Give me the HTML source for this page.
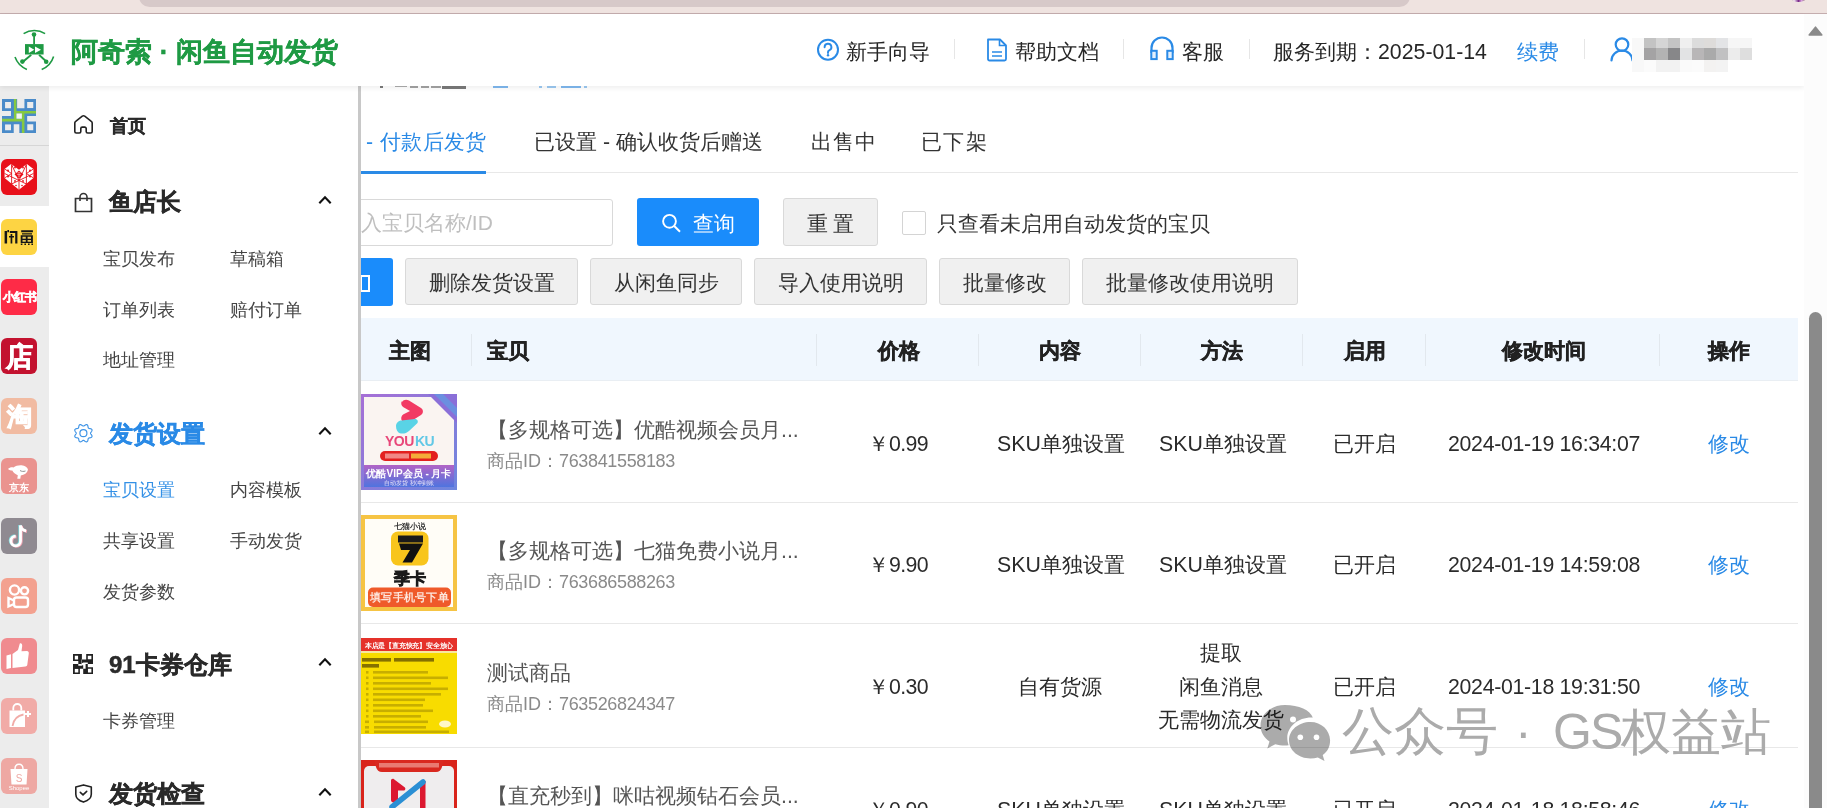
<!DOCTYPE html>
<html><head><meta charset="utf-8">
<style>
*{box-sizing:border-box;margin:0;padding:0}
html,body{width:1827px;height:808px;overflow:hidden;background:#fff;font-family:"Liberation Sans",sans-serif;color:#333}
.a{position:absolute;white-space:nowrap}
#top{left:0;top:0;width:1827px;height:14px;background:#efe3e0;border-bottom:1px solid #c4adae}
#pill{left:139px;top:-14px;width:1271px;height:21px;background:#d7c9c9;border-radius:14px}
#hdr{left:0;top:14px;width:1804px;height:72px;background:#fff;box-shadow:0 2px 5px rgba(0,0,0,.07);z-index:5}
#sb{left:1804px;top:14px;width:23px;height:794px;background:#fcfcfc;z-index:6}
#icol{left:0;top:86px;width:49px;height:722px;background:#ececec}
#menu{left:49px;top:86px;width:309px;height:722px;background:#fff}
#mborder{left:358px;top:86px;width:3px;height:722px;background:#c8c8c8;z-index:4}
.logo-t{left:71px;top:18px;font-size:27.25px;font-weight:bold;color:#1f9a44;-webkit-text-stroke:0.35px #1f9a44;line-height:40px;letter-spacing:0}
.nav{top:23px;font-size:21.3px;line-height:30px;color:#262626}
.sep{top:40px;width:1px;height:20px;background:#e6e6e6}
.mh{font-size:24px;font-weight:bold;line-height:30px;color:#2a2a2a;-webkit-text-stroke:0.5px currentColor;margin-top:1px}
.mi{font-size:18px;line-height:24px;color:#444}
.chev{width:14px;height:9px}
.tab{top:127px;font-size:21.3px;line-height:30px;color:#333}
.btn{height:47px;background:#f0f0f0;border:1px solid #d9d9d9;border-radius:3px;font-size:21.3px;line-height:49px;text-align:center;color:#333}
.th{top:336px;font-size:21.3px;font-weight:bold;line-height:30px;color:#222;-webkit-text-stroke:0.5px #222}
.thd{top:334px;width:1px;height:32px;background:#e2e8ee}
.td{font-size:21.3px;line-height:30px;color:#2b2b2b;margin-top:-1.5px}
.tt{font-size:21.3px;line-height:30px;color:#555}
.tid{font-size:18px;line-height:24px;color:#8a8a8a}
.lnk{color:#2a8ae6}
.dt{letter-spacing:-0.3px}
.rowline{left:361px;width:1437px;height:1px;background:#e8e8e8}
.wm{font-size:50px;line-height:70px;color:#ababab;z-index:3}
.img{width:96px;height:96px;left:361px;overflow:hidden}
</style></head><body>
<div id="top" class="a"><div id="pill" class="a"></div><div class="a" style="left:1791px;top:-6px;width:15px;height:8px;border-radius:50%;background:linear-gradient(90deg,#a89090 0,#f4e8f6 20%,#7a2a8a 50%,#d79ee0 70%,#8a7468 100%)"></div></div>

<div id="hdr" class="a">
  <svg class="a" style="left:5px;top:6px" width="60" height="60" viewBox="0 0 60 60">
    <g fill="none" stroke="#1f9a44" stroke-width="1.6">
      <path d="M18.6 13.7 A20 20 0 0 1 40.1 13.7"/>
      <path d="M10 37.1 A20.8 20.8 0 0 0 21.9 49.4"/>
      <path d="M48.6 36.4 A20.8 20.8 0 0 1 36.7 49.4"/>
    </g>
    <g fill="#1f9a44">
      <circle cx="29" cy="14.5" r="2.3"/><circle cx="17.4" cy="41.6" r="2.3"/><circle cx="41.2" cy="41.8" r="2.3"/>
      <rect x="28.2" y="14.5" width="1.8" height="10"/>
      <path d="M25.5 34.2 L26.9 35.6 L18.3 42.7 L16.9 41.3Z"/>
      <path d="M33.4 35.6 L34.8 34.2 L42.3 41.1 L40.9 42.5Z"/>
      <rect x="20" y="24.1" width="18.6" height="10.4"/>
    </g>
    <g fill="#fff"><path d="M23.8 26.4 L23.8 33 L29.3 29.7Z"/><path d="M30 26.4 L30 33 L36 29.7Z"/></g>
  </svg>
  <div class="a logo-t">阿奇索 · 闲鱼自动发货</div>
  <svg class="a" style="left:816px;top:24px" width="24" height="24" viewBox="0 0 24 24">
    <circle cx="12" cy="11.7" r="10" fill="none" stroke="#2a8ae6" stroke-width="2"/>
    <path d="M8.6 9.2a3.4 3.4 0 1 1 4.6 3.1c-.8.4-1.2 1-1.2 1.8v.9" fill="none" stroke="#2a8ae6" stroke-width="1.9" stroke-linecap="round"/>
    <circle cx="12" cy="17.3" r="1.2" fill="#2a8ae6"/>
  </svg>
  <div class="a nav" style="left:846px">新手向导</div>
  <div class="a sep" style="left:954px;top:25px"></div>
  <svg class="a" style="left:985px;top:23px" width="24" height="26" viewBox="0 0 24 26">
    <path d="M3 2.5h12l6 6V22a1.5 1.5 0 0 1-1.5 1.5h-15A1.5 1.5 0 0 1 3 22Z" fill="none" stroke="#2a8ae6" stroke-width="1.8" stroke-linejoin="round"/>
    <path d="M14.5 2.5v6h6" fill="none" stroke="#2a8ae6" stroke-width="1.6"/>
    <path d="M7 15h10M7 19h10" stroke="#2a8ae6" stroke-width="1.6"/>
  </svg>
  <div class="a nav" style="left:1015px">帮助文档</div>
  <div class="a sep" style="left:1123px;top:25px"></div>
  <svg class="a" style="left:1149px;top:22px" width="26" height="25" viewBox="0 0 26 25">
    <path d="M2.5 17V12a10.5 10.5 0 0 1 21 0v5" fill="none" stroke="#2a8ae6" stroke-width="2.2"/>
    <rect x="2.3" y="14.8" width="5.4" height="8.3" fill="#e3f0fc" stroke="#2a8ae6" stroke-width="2"/>
    <rect x="18.3" y="14.8" width="5.4" height="8.3" fill="#e3f0fc" stroke="#2a8ae6" stroke-width="2"/>
  </svg>
  <div class="a nav" style="left:1182px">客服</div>
  <div class="a sep" style="left:1249px;top:25px"></div>
  <div class="a nav" style="left:1273px">服务到期：2025-01-14</div>
  <div class="a nav lnk" style="left:1517px">续费</div>
  <div class="a sep" style="left:1584px;top:25px"></div>
  <svg class="a" style="left:1609px;top:22px" width="26" height="26" viewBox="0 0 26 26">
    <circle cx="13" cy="8.6" r="6.3" fill="none" stroke="#2a8ae6" stroke-width="2.2"/>
    <path d="M2.5 24.5a10.5 10 0 0 1 21 0" fill="none" stroke="#2a8ae6" stroke-width="2.2" stroke-linecap="round"/>
  </svg>
  <div class="a" style="left:1632px;top:24px;width:12px;height:34px;background:#f8f8f8"></div>
  <div class="a" style="left:1644px;top:24px;width:108px;height:10px;background:linear-gradient(90deg,#c3c3c3 0px 12px,#d5d5d5 12px 24px,#c4c4c4 24px 36px,#efefef 36px 48px,#dcdcdc 48px 60px,#dedcda 60px 72px,#e3e4e6 72px 84px,#f6f6f6 84px 96px,#f6f6f6 96px 108px)"></div>
  <div class="a" style="left:1644px;top:34px;width:108px;height:12px;background:linear-gradient(90deg,#a4a3a4 0px 12px,#b3b3b3 12px 24px,#878789 24px 36px,#e2e3e4 36px 48px,#b8b6b7 48px 60px,#aaaaaa 60px 72px,#c1c1c2 72px 84px,#ececec 84px 96px,#dedede 96px 108px)"></div>
  <div class="a" style="left:1644px;top:46px;width:108px;height:12px;background:linear-gradient(90deg,#fbfbfb 0px 12px,#f2f2f2 12px 24px,#f2f2f2 24px 36px,#fafafa 36px 48px,#fbfbfb 48px 60px,#f3f2f1 60px 72px,#f3f3f3 72px 84px,#fff 84px 96px,#fff 96px 108px)"></div>
</div>

<div id="sb" class="a">
  <svg class="a" style="left:4px;top:12px" width="15" height="10" viewBox="0 0 15 10"><path d="M7.5 1.2L13.8 9H1.2Z" fill="#8a8a8a" stroke="#8a8a8a" stroke-width="1.6" stroke-linejoin="round"/></svg>
  <div class="a" style="left:5px;top:298px;width:13px;height:520px;border-radius:6.5px;background:#8a8a8a"></div>
</div>
<div id="icol" class="a">
  <div class="a" style="left:0;top:59px;width:49px;height:1px;background:#d6d6d6"></div>
  <div class="a" style="left:0;top:120px;width:49px;height:61px;background:#fff"></div>
</div>
<svg class="a" style="left:2px;top:99px" width="34" height="34" viewBox="0 0 20 20">
  <g fill="#4a8bc9" fill-rule="evenodd">
    <path d="M0 0h6.9v7H0Z M1.8 1.8v3.6h3.5V1.8Z"/>
    <path d="M13.2 0H20v7h-6.8Z M14.8 1.8v3.6h3.6V1.8Z"/>
    <path d="M0 13.3h6.9V20H0Z M1.8 14.8v3.6h3.5v-3.6Z"/>
    <path d="M13.2 13.3H20V20h-6.8Z M14.8 14.8v3.6h3.6v-3.6Z"/>
  </g>
  <g fill="#4a8bc9">
    <path d="M5.3 0h3.6v11.8H5.3Z M8.5 5.4H20V10H8.5Z M10.2 8.5h4.6V20h-4.6Z M0 10h12.6v4.8H0Z"/>
  </g>
  <g fill="#86c940">
    <path d="M7 0h1.5v13.2H7Z M7 7H20v1.5H7Z M11.7 7h1.5V20h-1.5Z M0 11.6h13.2v1.6H0Z"/>
  </g>
  <path d="M8.5 8.5h3.2v3.1H8.5Z" fill="#f4f7ef"/>
</svg>
<!-- PDD -->
<svg class="a" style="left:1px;top:159px" width="36" height="36" viewBox="0 0 36 36">
  <rect x="0" y="0" width="36" height="36" rx="6" fill="#e8101a"/>
  <path d="M18 10.7L10.1 5.1 3.6 10 3.6 18.9 18 30.7 32.4 18.9 32.4 10 25.9 5.1Z" fill="#fff"/>
  <g stroke="#e8101a" stroke-width="0.9" fill="none">
    <path d="M10.6 5.5V25M25.4 5.5V25M3.6 14.5L18 21.5 32.4 14.5M3.6 18.9L10.6 14.5M32.4 18.9L25.4 14.5M10.6 5.5L18 21.5 25.4 5.5M18 21.5V30.7M10.6 25L18 21.5 25.4 25M3.6 10L10.6 14.5M32.4 10L25.4 14.5"/>
  </g>
  <path d="M13.5 15.5L18 11.5 22.5 15.5 18 19.5Z" fill="#e8101a"/>
  <g fill="#e8101a"><circle cx="7" cy="11.5" r="1"/><circle cx="29" cy="11.5" r="1"/><circle cx="14" cy="8.5" r="0.9"/><circle cx="22" cy="8.5" r="0.9"/><circle cx="7" cy="17.5" r="1"/><circle cx="29" cy="17.5" r="1"/><circle cx="14" cy="22" r="0.9"/><circle cx="22" cy="22" r="0.9"/><circle cx="15" cy="26.5" r="0.8"/><circle cx="21" cy="26.5" r="0.8"/></g>
  <path d="M16.5 13.8h3M16.2 15.4h3.6M17 17h2" stroke="#fff" stroke-width="0.6"/>
</svg>
<!-- Xianyu -->
<svg class="a" style="left:1px;top:219px" width="36" height="36" viewBox="0 0 36 36">
  <rect x="0" y="0" width="36" height="36" rx="6" fill="#fdd443"/>
  <g fill="#161616">
    <path d="M3.6 12h2.5v12.5H3.6Z M6.4 11h1.6v2.2H6.4Z M8.8 12h7.6v2.1H8.8Z M14.2 12h2.2v12.5h-2.2Z M9.6 15h1.7v9.5H9.6Z M8 17h5v1.6H8Z"/>
    <path d="M20.2 11.2h11.7v2H20.2Z M21 14.3h10v1.2H21Z M19.7 16.3h12.2V24H19.7Z"/>
    <path d="M19.8 24.6h1.6v1.3h-1.6Z M23.4 24.6h1.6v1.3h-1.6Z M27 24.6h1.6v1.3H27Z M30.4 24.6h1.6v1.3h-1.6Z"/>
  </g>
  <g fill="#e8c85a"><path d="M21.5 17.8h3.3v1.9h-3.3Z M26.6 17.8h3.4v1.9h-3.4Z M21.5 21.1h3.3v1.7h-3.3Z M26.6 21.1h3.4v1.7h-3.4Z"/></g>
</svg>
<!-- Xiaohongshu -->
<div class="a" style="left:1px;top:279px;width:36px;height:36px;border-radius:6px;background:#fe2b47;color:#fff;font-size:11.5px;font-weight:bold;line-height:36px;text-align:center;letter-spacing:-1px;-webkit-text-stroke:0.5px #fff">小红书</div>
<!-- Dian -->
<div class="a" style="left:1px;top:338px;width:36px;height:36px;border-radius:6px;background:#c3122f;color:#fff;font-size:27px;font-weight:bold;line-height:38px;text-align:center;-webkit-text-stroke:0.8px #fff">店</div>
<!-- Tao -->
<div class="a" style="left:1px;top:398px;width:36px;height:36px;border-radius:6px;background:#f1bba2;color:#fff;font-size:25px;font-weight:bold;line-height:37px;text-align:center;-webkit-text-stroke:1px #fff">淘</div>
<!-- JD -->
<svg class="a" style="left:1px;top:458px" width="36" height="36" viewBox="0 0 36 36">
  <rect x="0" y="0" width="36" height="36" rx="6" fill="#ea938f"/>
  <path d="M7 11c1.5-1.5 3.5-2.2 5.5-1.6 2-1.6 5-2.4 8-2.2 3.5.3 6 2 6.5 4.6-.8 3.3-3.6 5.3-7.2 5.6l-.5 3.3h-3l.5-3.5c-2.5-.8-4.5-2.6-5.5-4.6-1.5 0-3-.5-4.3-1.6Z" fill="#fff"/>
  <path d="M19 12.5c1.5 1 3.5 1.2 5.5.5" stroke="#777" stroke-width="0.8" fill="none"/>
  <text x="18" y="33" font-size="10" font-weight="bold" fill="#fff" text-anchor="middle" font-family="Liberation Sans, sans-serif">京东</text>
</svg>
<!-- Douyin -->
<svg class="a" style="left:1px;top:518px" width="36" height="36" viewBox="0 0 36 36">
  <rect x="0" y="0" width="36" height="36" rx="6" fill="#8f8a91"/>
  <path d="M19.5 7.5v15.5a4.8 4.8 0 1 1-4.8-4.8" fill="none" stroke="#7fd3d6" stroke-width="2.8" transform="translate(-0.8,-0.6)"/>
  <path d="M19.5 7.5c.6 3 2.6 5 5.6 5.4" fill="none" stroke="#7fd3d6" stroke-width="2.8" transform="translate(-0.8,-0.6)"/>
  <path d="M19.5 7.5v15.5a4.8 4.8 0 1 1-4.8-4.8" fill="none" stroke="#f2a3b3" stroke-width="2.8" transform="translate(0.8,0.6)"/>
  <path d="M19.5 7.5c.6 3 2.6 5 5.6 5.4" fill="none" stroke="#f2a3b3" stroke-width="2.8" transform="translate(0.8,0.6)"/>
  <path d="M19.5 7.5v15.5a4.8 4.8 0 1 1-4.8-4.8" fill="none" stroke="#fff" stroke-width="2.8"/>
  <path d="M19.5 7.5c.6 3 2.6 5 5.6 5.4" fill="none" stroke="#fff" stroke-width="2.8"/>
</svg>
<!-- Kuaishou -->
<svg class="a" style="left:1px;top:578px" width="36" height="36" viewBox="0 0 36 36">
  <rect x="0" y="0" width="36" height="36" rx="6" fill="#f3a18f"/>
  <g fill="none" stroke="#fff" stroke-width="2.4">
    <circle cx="13.5" cy="12" r="4.6"/><circle cx="23.5" cy="12.8" r="3.6"/>
    <rect x="13" y="19.5" width="14" height="9.5" rx="2.5"/>
    <path d="M13 22.5L7.5 20v8.5L13 26"/>
  </g>
</svg>
<!-- Thumb -->
<svg class="a" style="left:1px;top:638px" width="36" height="36" viewBox="0 0 36 36">
  <rect x="0" y="0" width="36" height="36" rx="6" fill="#f08b8f"/>
  <path d="M5.5 17.5l4.5-1.2V30L5.5 31Z" fill="#fff"/>
  <path d="M11.5 16l5.5-4 1.8-6.5c1.6-.6 2.6.8 2.4 2.6l-.7 5.2 5.5-.3c1.2 0 2 1 1.8 2.3l-1.5 11.5c-.2 1-.9 1.6-1.9 1.6L11.5 30Z" fill="#fff"/>
</svg>
<!-- Bag plus -->
<svg class="a" style="left:1px;top:698px" width="36" height="36" viewBox="0 0 36 36">
  <rect x="0" y="0" width="36" height="36" rx="6" fill="#f1aba7"/>
  <path d="M8.5 12.5h15.5v16.5H8.5Z" fill="#fff"/>
  <path d="M12.3 12.5V10a4 4 0 0 1 8 0v2.5" fill="none" stroke="#fff" stroke-width="1.8"/>
  <path d="M11.5 28c1-6 5-10.5 11-11.5" fill="none" stroke="#f1aba7" stroke-width="1.8"/>
  <path d="M27 13v6M24 16h6" stroke="#fff" stroke-width="2"/>
</svg>
<!-- Shopee -->
<svg class="a" style="left:1px;top:758px" width="36" height="36" viewBox="0 0 36 36">
  <rect x="0" y="0" width="36" height="36" rx="6" fill="#eea8a3"/>
  <path d="M9.5 11h17l-1 15.5h-15Z" fill="#fff"/>
  <path d="M14 11c0-3 1.8-4.8 4-4.8s4 1.8 4 4.8" fill="none" stroke="#fff" stroke-width="1.4"/>
  <text x="18" y="23.5" font-size="10" fill="#eea8a3" text-anchor="middle" font-family="Liberation Sans, sans-serif">S</text>
  <text x="18" y="32" font-size="6" fill="#fff" text-anchor="middle" font-family="Liberation Sans, sans-serif">Shopee</text>
</svg>
<div id="menu" class="a"></div>
<!-- menu content (absolute page coords) -->
<svg class="a" style="left:73px;top:114px" width="21" height="21" viewBox="0 0 21 21">
  <path d="M1.8 17.5V9a2 2 0 0 1 .9-1.7L9.3 2.2a2 2 0 0 1 2.4 0L18.3 7.3a2 2 0 0 1 .9 1.7V17.5a1.5 1.5 0 0 1-1.5 1.5H14.7a1.5 1.5 0 0 1-1.5-1.5V14.6a1.5 1.5 0 0 0-1.5-1.5H9.3a1.5 1.5 0 0 0-1.5 1.5V17.5a1.5 1.5 0 0 1-1.5 1.5H3.3a1.5 1.5 0 0 1-1.5-1.5Z" fill="none" stroke="#222" stroke-width="1.6" stroke-linejoin="round"/>
</svg>
<div class="a" style="left:110px;top:113px;font-size:18px;font-weight:bold;line-height:26px;color:#2a2a2a;-webkit-text-stroke:0.4px #2a2a2a">首页</div>

<svg class="a" style="left:74px;top:192px" width="19" height="21" viewBox="0 0 19 21">
  <path d="M1.5 6.5h16v13h-16Z" fill="none" stroke="#333" stroke-width="1.7"/>
  <path d="M6 9V5a3.5 3.5 0 0 1 7 0v4" fill="none" stroke="#333" stroke-width="1.6"/>
</svg>
<div class="a mh" style="left:109px;top:186px">鱼店长</div>
<svg class="a chev" style="left:317.5px;top:195px" viewBox="0 0 14 9"><path d="M1.3 8.2L7 2.3l5.7 5.9" fill="none" stroke="#111" stroke-width="2.1"/></svg>
<div class="a mi" style="left:103px;top:247px">宝贝发布</div>
<div class="a mi" style="left:230px;top:247px">草稿箱</div>
<div class="a mi" style="left:103px;top:298px">订单列表</div>
<div class="a mi" style="left:230px;top:298px">赔付订单</div>
<div class="a mi" style="left:103px;top:348px">地址管理</div>

<svg class="a" style="left:73px;top:423px" width="21" height="21" viewBox="0 0 21 21">
  <path d="M17.55 10.20 L17.60 9.92 L17.73 9.62 L17.93 9.31 L18.18 8.97 L18.44 8.60 L18.69 8.21 L18.89 7.81 L19.01 7.40 L19.03 7.02 L18.95 6.66 L18.75 6.35 L18.46 6.09 L18.09 5.89 L17.67 5.75 L17.22 5.64 L16.77 5.57 L16.35 5.51 L15.99 5.43 L15.69 5.31 L15.46 5.14 L15.29 4.91 L15.17 4.61 L15.09 4.25 L15.03 3.83 L14.96 3.38 L14.85 2.93 L14.71 2.51 L14.51 2.14 L14.25 1.85 L13.94 1.65 L13.58 1.57 L13.20 1.59 L12.79 1.71 L12.39 1.91 L12.00 2.16 L11.63 2.42 L11.29 2.67 L10.98 2.87 L10.68 3.00 L10.40 3.05 L10.12 3.00 L9.82 2.87 L9.51 2.67 L9.17 2.42 L8.80 2.16 L8.41 1.91 L8.01 1.71 L7.60 1.59 L7.22 1.57 L6.86 1.65 L6.55 1.85 L6.29 2.14 L6.09 2.51 L5.95 2.93 L5.84 3.38 L5.77 3.83 L5.71 4.25 L5.63 4.61 L5.51 4.91 L5.34 5.14 L5.11 5.31 L4.81 5.43 L4.45 5.51 L4.03 5.57 L3.58 5.64 L3.13 5.75 L2.71 5.89 L2.34 6.09 L2.05 6.35 L1.85 6.66 L1.77 7.02 L1.79 7.40 L1.91 7.81 L2.11 8.21 L2.36 8.60 L2.62 8.97 L2.87 9.31 L3.07 9.62 L3.20 9.92 L3.25 10.20 L3.20 10.48 L3.07 10.78 L2.87 11.09 L2.62 11.43 L2.36 11.80 L2.11 12.19 L1.91 12.59 L1.79 13.00 L1.77 13.38 L1.85 13.74 L2.05 14.05 L2.34 14.31 L2.71 14.51 L3.13 14.65 L3.58 14.76 L4.03 14.83 L4.45 14.89 L4.81 14.97 L5.11 15.09 L5.34 15.26 L5.51 15.49 L5.63 15.79 L5.71 16.15 L5.77 16.57 L5.84 17.02 L5.95 17.47 L6.09 17.89 L6.29 18.26 L6.55 18.55 L6.86 18.75 L7.22 18.83 L7.60 18.81 L8.01 18.69 L8.41 18.49 L8.80 18.24 L9.17 17.98 L9.51 17.73 L9.82 17.53 L10.12 17.40 L10.40 17.35 L10.68 17.40 L10.98 17.53 L11.29 17.73 L11.63 17.98 L12.00 18.24 L12.39 18.49 L12.79 18.69 L13.20 18.81 L13.58 18.83 L13.94 18.75 L14.25 18.55 L14.51 18.26 L14.71 17.89 L14.85 17.47 L14.96 17.02 L15.03 16.57 L15.09 16.15 L15.17 15.79 L15.29 15.49 L15.46 15.26 L15.69 15.09 L15.99 14.97 L16.35 14.89 L16.77 14.83 L17.22 14.76 L17.67 14.65 L18.09 14.51 L18.46 14.31 L18.75 14.05 L18.95 13.74 L19.03 13.38 L19.01 13.00 L18.89 12.59 L18.69 12.19 L18.44 11.80 L18.18 11.43 L17.93 11.09 L17.73 10.78 L17.60 10.48 L17.55 10.20Z" fill="none" stroke="#3f94e6" stroke-width="1.15" stroke-linejoin="round"/>
  <circle cx="10.4" cy="10.2" r="3.5" fill="none" stroke="#3f94e6" stroke-width="1.2"/>
</svg>
<div class="a mh" style="left:109px;top:418px;color:#2a8ae6">发货设置</div>
<svg class="a chev" style="left:317.5px;top:426px" viewBox="0 0 14 9"><path d="M1.3 8.2L7 2.3l5.7 5.9" fill="none" stroke="#111" stroke-width="2.1"/></svg>
<div class="a mi" style="left:103px;top:478px;color:#3390e6">宝贝设置</div>
<div class="a mi" style="left:230px;top:478px">内容模板</div>
<div class="a mi" style="left:103px;top:529px">共享设置</div>
<div class="a mi" style="left:230px;top:529px">手动发货</div>
<div class="a mi" style="left:103px;top:580px">发货参数</div>

<svg class="a" style="left:73px;top:654px" width="20" height="20" viewBox="0 0 20 20">
  <g fill="#222" fill-rule="evenodd">
    <path d="M0 0h6.9v7H0Z M1.8 1.8v3.6h3.5V1.8Z"/>
    <path d="M13.2 0H20v7h-6.8Z M14.8 1.8v3.6h3.6V1.8Z"/>
    <path d="M0 13.3h6.9V20H0Z M1.8 14.8v3.6h3.5v-3.6Z"/>
    <path d="M13.2 13.3H20V20h-6.8Z M14.8 14.8v3.6h3.6v-3.6Z"/>
    <path d="M5.3 0h3.6v11.8H5.3Z M8.5 5.4H20V10H8.5Z M10.2 8.5h4.6V20h-4.6Z M0 10h12.6v4.8H0Z"/>
  </g>
  <path d="M8.9 8.9h2.4v2.4H8.9Z" fill="#fff"/>
</svg>
<div class="a mh" style="left:109px;top:649px">91卡券仓库</div>
<svg class="a chev" style="left:317.5px;top:657px" viewBox="0 0 14 9"><path d="M1.3 8.2L7 2.3l5.7 5.9" fill="none" stroke="#111" stroke-width="2.1"/></svg>
<div class="a mi" style="left:103px;top:709px">卡券管理</div>

<svg class="a" style="left:74px;top:783px" width="20" height="21" viewBox="0 0 20 21">
  <path d="M9.5 1.9L17.3 4.1V11.2C17.3 15 14.2 17.6 9.5 19.1 4.8 17.6 1.8 15 1.8 11.2V4.1Z" fill="none" stroke="#222" stroke-width="1.6" stroke-linejoin="round"/>
  <path d="M6.3 9.4l2.7 2.4 3.7-3.5" fill="none" stroke="#222" stroke-width="1.6" stroke-linecap="round"/>
</svg>
<div class="a mh" style="left:109px;top:778px">发货检查</div>
<svg class="a chev" style="left:317.5px;top:787px" viewBox="0 0 14 9"><path d="M1.3 8.2L7 2.3l5.7 5.9" fill="none" stroke="#111" stroke-width="2.1"/></svg>

<div id="mborder" class="a"></div>

<!-- content -->
<div class="a" style="left:361px;top:86px;width:1443px;height:722px;overflow:hidden"><div class="a" style="left:-361px;top:-86px;width:1827px;height:808px">
<div class="a" style="left:380px;top:86px;width:3px;height:2px;background:#222;opacity:0.6"></div>
<div class="a" style="left:395px;top:86px;width:12px;height:1px;background:#777;opacity:0.6"></div>
<div class="a" style="left:410px;top:86px;width:8px;height:1.5px;background:#666;opacity:0.6"></div>
<div class="a" style="left:421px;top:86px;width:8px;height:1.5px;background:#666;opacity:0.6"></div>
<div class="a" style="left:431px;top:86px;width:10px;height:1.5px;background:#666;opacity:0.6"></div>
<div class="a" style="left:442px;top:86px;width:24px;height:3px;background:#222;opacity:0.6"></div>
<div class="a" style="left:493px;top:86px;width:15px;height:2px;background:#2a8ae6;opacity:0.6"></div>
<div class="a" style="left:539px;top:86px;width:3px;height:2px;background:#5aa5ea;opacity:0.6"></div>
<div class="a" style="left:547px;top:86px;width:9px;height:2px;background:#5aa5ea;opacity:0.6"></div>
<div class="a" style="left:561px;top:86px;width:20px;height:2px;background:#2a8ae6;opacity:0.6"></div>
<div class="a" style="left:584px;top:86px;width:3px;height:2px;background:#5aa5ea;opacity:0.6"></div>
<div class="a tab" style="left:366px;color:#2a8ae6;letter-spacing:0.4px">- 付款后发货</div>
<div class="a tab" style="left:534px">已设置 - 确认收货后赠送</div>
<div class="a tab" style="left:811px;letter-spacing:1.2px">出售中</div>
<div class="a tab" style="left:921px;letter-spacing:1.3px">已下架</div>
<div class="a" style="left:361px;top:172px;width:1437px;height:1px;background:#e8e8e8"></div>
<div class="a" style="left:361px;top:171px;width:125px;height:3px;background:#2a8ae6"></div>

<div class="a" style="left:340px;top:199px;width:273px;height:47px;border:1px solid #d9d9d9;border-radius:3px;background:#fff"></div>
<div class="a" style="left:361px;top:208px;font-size:21px;line-height:30px;color:#bfbfbf;letter-spacing:0">入宝贝名称/ID</div>
<div class="a" style="left:637px;top:198px;width:122px;height:48px;background:#1a8cfb;border-radius:3px"></div>
<svg class="a" style="left:661px;top:213px" width="22" height="20" viewBox="0 0 22 20">
  <circle cx="8.5" cy="8.3" r="6.4" fill="none" stroke="#fff" stroke-width="1.9"/>
  <path d="M13.2 13l5.8 5.8" stroke="#fff" stroke-width="2"/>
</svg>
<div class="a" style="left:693px;top:209px;font-size:21.3px;line-height:30px;color:#fff">查询</div>
<div class="a btn" style="left:783px;top:198px;width:95px;height:48px;line-height:51px">重 置</div>
<div class="a" style="left:902px;top:211px;width:24px;height:24px;border:1px solid #d4d4d4;border-radius:2px;background:#fff"></div>
<div class="a" style="left:937px;top:209px;font-size:21.3px;line-height:30px;color:#333">只查看未启用自动发货的宝贝</div>

<div class="a" style="left:340px;top:258px;width:53px;height:48px;background:#1a8cfb;border-radius:3px;overflow:hidden"><div class="a" style="left:20px;top:17px;width:10px;height:17px;border:2px solid #fff"></div></div>
<div class="a btn" style="left:405px;top:258px;width:173px">删除发货设置</div>
<div class="a btn" style="left:590px;top:258px;width:152px">从闲鱼同步</div>
<div class="a btn" style="left:754px;top:258px;width:173px">导入使用说明</div>
<div class="a btn" style="left:939px;top:258px;width:131px">批量修改</div>
<div class="a btn" style="left:1082px;top:258px;width:216px">批量修改使用说明</div>

<!-- table header -->
<div class="a" style="left:361px;top:318px;width:1437px;height:63px;background:#f0f7fe;border-bottom:1px solid #e9eef3"></div>
<div class="a thd" style="left:471px"></div>
<div class="a thd" style="left:816px"></div>
<div class="a thd" style="left:978px"></div>
<div class="a thd" style="left:1140px"></div>
<div class="a thd" style="left:1302px"></div>
<div class="a thd" style="left:1425px"></div>
<div class="a thd" style="left:1659px"></div>
<div class="a th" style="left:389px">主图</div>
<div class="a th" style="left:487px">宝贝</div>
<div class="a th" style="left:878px">价格</div>
<div class="a th" style="left:1039px">内容</div>
<div class="a th" style="left:1201px">方法</div>
<div class="a th" style="left:1344px">启用</div>
<div class="a th" style="left:1502px">修改时间</div>
<div class="a th" style="left:1708px">操作</div>

<!-- rows -->
<div class="a rowline" style="top:502px"></div>
<div class="a rowline" style="top:623px"></div>
<div class="a rowline" style="top:747px"></div>

<div class="a tt" style="left:487px;top:415px">【多规格可选】优酷视频会员月...</div>
<div class="a tid" style="left:487px;top:449px">商品ID：<span style="letter-spacing:-0.35px">763841558183</span></div>
<div class="a td" style="left:868px;top:430px">￥<span style="letter-spacing:-0.6px">0.99</span></div>
<div class="a td" style="left:997px;top:430px">SKU单独设置</div>
<div class="a td" style="left:1159px;top:430px">SKU单独设置</div>
<div class="a td" style="left:1333px;top:430px">已开启</div>
<div class="a td dt" style="left:1448px;top:430px">2024-01-19 16:34:07</div>
<div class="a td lnk" style="left:1708px;top:430px">修改</div>

<div class="a tt" style="left:487px;top:536px">【多规格可选】七猫免费小说月...</div>
<div class="a tid" style="left:487px;top:570px">商品ID：<span style="letter-spacing:-0.35px">763686588263</span></div>
<div class="a td" style="left:868px;top:551px">￥<span style="letter-spacing:-0.6px">9.90</span></div>
<div class="a td" style="left:997px;top:551px">SKU单独设置</div>
<div class="a td" style="left:1159px;top:551px">SKU单独设置</div>
<div class="a td" style="left:1333px;top:551px">已开启</div>
<div class="a td dt" style="left:1448px;top:551px">2024-01-19 14:59:08</div>
<div class="a td lnk" style="left:1708px;top:551px">修改</div>

<div class="a tt" style="left:487px;top:658px">测试商品</div>
<div class="a tid" style="left:487px;top:692px">商品ID：<span style="letter-spacing:-0.35px">763526824347</span></div>
<div class="a td" style="left:868px;top:673px">￥<span style="letter-spacing:-0.6px">0.30</span></div>
<div class="a td" style="left:1018px;top:673px">自有货源</div>
<div class="a td" style="left:1200px;top:639px">提取</div>
<div class="a td" style="left:1179px;top:673px">闲鱼消息</div>
<div class="a td" style="left:1158px;top:706px">无需物流发货</div>
<div class="a td" style="left:1333px;top:673px">已开启</div>
<div class="a td dt" style="left:1448px;top:673px">2024-01-18 19:31:50</div>
<div class="a td lnk" style="left:1708px;top:673px">修改</div>

<div class="a tt" style="left:487px;top:781px">【直充秒到】咪咕视频钻石会员...</div>
<div class="a td" style="left:868px;top:796px">￥<span style="letter-spacing:-0.6px">0.90</span></div>
<div class="a td" style="left:997px;top:796px">SKU单独设置</div>
<div class="a td" style="left:1159px;top:796px">SKU单独设置</div>
<div class="a td" style="left:1333px;top:796px">已开启</div>
<div class="a td dt" style="left:1448px;top:796px">2024-01-18 18:58:46</div>
<div class="a td lnk" style="left:1708px;top:796px">修改</div>

<svg class="a img" style="top:394px" width="96" height="96" viewBox="0 0 96 96">
  <defs>
    <linearGradient id="yk1" x1="0" y1="0" x2="0" y2="1"><stop offset="0" stop-color="#b163c6"/><stop offset="1" stop-color="#4f74df"/></linearGradient>
    <linearGradient id="yk2" x1="0" y1="0" x2="1" y2="1"><stop offset="0" stop-color="#a66fd6"/><stop offset="1" stop-color="#6d86de"/></linearGradient>
  </defs>
  <rect width="96" height="96" fill="url(#yk2)"/>
  <rect x="3" y="3" width="90" height="69" fill="#faf4f1"/>
  <rect x="3" y="71" width="90" height="22" fill="url(#yk1)"/>
  <path d="M67 0H96V29Z" fill="#8a6fd8"/>
  <path d="M73 0H82L96 14V23Z" fill="#6b8fe0"/>
  <path d="M41 8c1.5-2.5 4.5-3 7-1.5l12 7.5c2.6 1.6 2.6 5.4 0 7L48 28.5c-2.5 1.5-5.5 1-7-1.5-1.5-2.3-.8-5.3 1.5-6.7L49 17l-6.5-3.8c-2.3-1.4-3-4.4-1.5-6.2Z" fill="#f23a63"/>
  <path d="M35 32c0-3 2.5-5.5 5.5-5.5l13.5-1.5c2.5 0 3.8 2.8 2 4.6l-8 7.4c-2.5 2.3-6 3.2-9.2 2.2-2.4-.8-3.8-3.7-3.8-7.2Z" fill="#59d3e6"/>
  <text x="24" y="52" font-size="14" font-weight="bold" fill="#e8487a" font-family="Liberation Sans, sans-serif" letter-spacing="-0.5">YOU</text>
  <text x="54" y="52" font-size="14" font-weight="bold" fill="#62c8e6" font-family="Liberation Sans, sans-serif" letter-spacing="-0.5">KU</text>
  <rect x="19" y="57" width="58" height="10" rx="5" fill="#e3201f"/>
  <rect x="24" y="59.5" width="24" height="5" fill="#f6b5b0" opacity="0.7"/>
  <rect x="50" y="59.5" width="20" height="5" fill="#f7d040" opacity="0.8"/>
  <text x="48" y="82.5" font-size="10" font-weight="bold" fill="#fff" text-anchor="middle" font-family="Liberation Sans, sans-serif">优酷VIP会员 - 月卡</text>
  <text x="48" y="90.5" font-size="6" fill="#e8e4f8" text-anchor="middle" font-family="Liberation Sans, sans-serif">自动发货 秒冲到账</text>
</svg>
<svg class="a img" style="top:515px" width="96" height="96" viewBox="0 0 96 96">
  <rect width="96" height="96" fill="#f6c444"/>
  <rect x="4" y="4" width="88" height="88" fill="#fffdf7"/>
  <text x="49" y="14" font-size="7.5" font-weight="bold" fill="#333" text-anchor="middle" font-family="Liberation Sans, sans-serif">七猫小说</text>
  <rect x="30" y="16.5" width="37.5" height="34" rx="7" fill="#f8c51c"/>
  <rect x="37" y="20.5" width="25" height="7" fill="#1a1a1a"/>
  <path d="M38 28.5h24l-11 19h-9.5l7.5-12.5H40Z" fill="#111"/>
  <text x="49" y="69" font-size="16" font-weight="bold" fill="#1b1b1b" stroke="#1b1b1b" stroke-width="0.8" text-anchor="middle" font-family="Liberation Sans, sans-serif">季卡</text>
  <rect x="7" y="72.5" width="83" height="19.5" rx="5" fill="#ef5a2a"/>
  <text x="48.5" y="86" font-size="10.5" font-weight="bold" fill="#fde6dc" letter-spacing="0.3" text-anchor="middle" font-family="Liberation Sans, sans-serif">填写手机号下单</text>
</svg>
<svg class="a img" style="top:638px" width="96" height="96" viewBox="0 0 96 96">
  <rect width="96" height="96" fill="#f8dc00"/>
  <rect width="96" height="13" fill="#e5312a"/>
  <rect y="13" width="96" height="2" fill="#f7e7a0"/>
  <text x="48" y="9.5" font-size="7.2" font-weight="bold" fill="#fff" text-anchor="middle" font-family="Liberation Sans, sans-serif" letter-spacing="-0.2">本店是【直充快充】安全放心</text>
  <g fill="#3a2a00" opacity="0.6">
    <rect x="1" y="20" width="29" height="3.6"/><rect x="33" y="20" width="40" height="3.6"/><rect x="1" y="26" width="17" height="3.6"/>
  </g>
  <g fill="#7a6400" opacity="0.38">
    <rect x="12" y="33" width="55" height="2.6"/><rect x="12" y="38.5" width="75" height="2.6"/><rect x="12" y="44" width="58" height="2.6"/>
    <rect x="12" y="49.5" width="75" height="2.6"/><rect x="12" y="55" width="68" height="2.6"/><rect x="12" y="60.5" width="52" height="2.6"/>
    <rect x="12" y="66" width="50" height="2.6"/><rect x="12" y="71.5" width="60" height="2.6"/><rect x="12" y="77" width="48" height="2.6"/>
    <rect x="13" y="82.5" width="54" height="2.6"/><rect x="13" y="88" width="52" height="2.6"/><rect x="13" y="92.5" width="75" height="2.6"/>
    <rect x="5" y="33" width="2.5" height="2.6"/><rect x="5" y="38.5" width="2.5" height="2.6"/><rect x="5" y="44" width="2.5" height="2.6"/><rect x="5" y="49.5" width="2.5" height="2.6"/><rect x="5" y="55" width="2.5" height="2.6"/><rect x="5" y="60.5" width="2.5" height="2.6"/><rect x="5" y="66" width="2.5" height="2.6"/><rect x="5" y="71.5" width="2.5" height="2.6"/><rect x="5" y="77" width="2.5" height="2.6"/><rect x="4" y="82.5" width="4" height="2.6"/><rect x="4" y="88" width="4" height="2.6"/><rect x="4" y="92.5" width="4" height="2.6"/>
  </g>
  <ellipse cx="84" cy="86" rx="6" ry="3.5" fill="#fff7c8"/>
</svg>
<svg class="a img" style="top:760px" width="96" height="96" viewBox="0 0 96 96">
  <rect width="96" height="96" fill="#d9241b"/>
  <rect x="3" y="6" width="90" height="88" rx="5" fill="#efedee"/>
  <path d="M13 0h70l-2 7c-.8 3-3 5-6 5H21c-3 0-5.2-2-6-5Z" fill="#d9281f"/>
  <rect x="18" y="3" width="60" height="4.5" fill="#f4b0aa" opacity="0.6"/>
  <path d="M30 20.5c0-1.5 1.8-2.3 3-1.3l10.6 8c1.4 1 .8 3.3-1 3.3h-5.6V40c0 1.5-1 2.5-2.5 2.5h-2c-1.5 0-2.5-1-2.5-2.5Z" fill="#dc1830"/>
  <rect x="59" y="21" width="5.5" height="30" fill="#dc1830"/>
  <path d="M31 47L62 22" stroke="#2b8fd4" stroke-width="5.5" stroke-linecap="round"/>
</svg>
</div></div>

<!-- watermark -->
<svg class="a" style="left:1258px;top:702px;z-index:3;mix-blend-mode:multiply" width="74" height="62" viewBox="0 0 74 62">
  <g fill="#9c9c9c" fill-opacity="0.85">
    <path d="M27 3C13.5 3 2.5 12 2.5 23.5c0 6.5 3.5 12.2 9 16l-2.2 7 8-4.3c2.9.8 6.2 1.3 9.5 1.3 1.3 0 2.6-.1 3.8-.2C29.6 40 29.3 38 29.3 36c0-11.5 10.8-20.5 24-20.5.5 0 1 0 1.5.1C52.4 8.2 40.8 3 27 3Z"/>
    <path d="M52.5 20C40.5 20 31 28.2 31 38.3S40.5 56.5 52.5 56.5c2.6 0 5-.4 7.3-1.1l6.7 3.7-1.8-6c4.6-3.3 7.4-8.2 7.4-14.8C71.8 28.2 63.5 20 52.5 20Z"/>
  </g>
  <g fill="#fff"><circle cx="35" cy="17.6" r="3"/><circle cx="42.3" cy="35.3" r="2.8"/><circle cx="58.5" cy="35.3" r="2.8"/></g>
</svg>
<div class="a wm" style="left:1342px;top:696px;font-size:52px">公众号</div>
<div class="a wm" style="left:1515px;top:697px">·</div>
<div class="a wm" style="left:1553px;top:697px"><span style="letter-spacing:-2px">GS</span>权益站</div>
</body></html>
